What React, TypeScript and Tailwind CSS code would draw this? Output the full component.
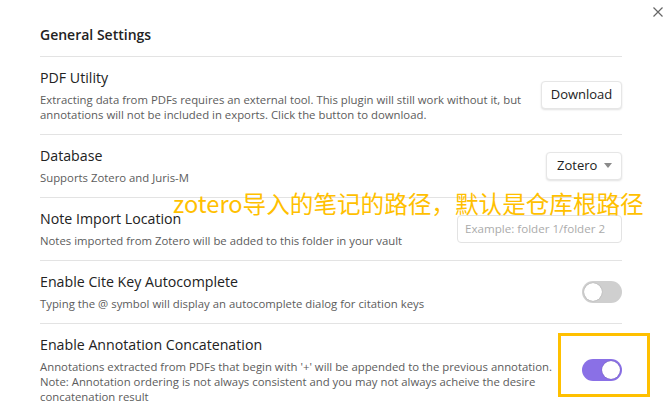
import React from 'react'

const font = { fontFamily: '"Open Sans", "Noto Sans CJK SC", sans-serif' }

function Toggle({ on }: { on: boolean }) {
  return (
    <div
      className={`flex h-[22px] w-[40px] items-center rounded-full px-[2px] ${
        on ? 'justify-end bg-[#8a70e6]' : 'justify-start bg-[#cfcfcf]'
      }`}
    >
      <div className="h-[18px] w-[18px] rounded-full bg-white shadow-[0_0_1px_rgba(0,0,0,0.4)]" />
    </div>
  )
}

function Row({
  title,
  children,
  control,
}: {
  title: string
  children: React.ReactNode
  control: React.ReactNode
}) {
  return (
    <div className="flex items-center gap-4 border-t border-[#e3e3e3] pt-[11px] pb-[12px]">
      <div className="flex-1">
        <div className="text-[14.2px] leading-[20px] text-[#222]">{title}</div>
        <div className="mt-1 text-[11.35px] leading-[15px] text-[#5c5c5c]">{children}</div>
      </div>
      <div className="shrink-0">{control}</div>
    </div>
  )
}

export default function App() {
  return (
    <div className="relative h-[417px] w-[667px] overflow-hidden bg-white" style={font}>
      <button className="absolute top-[7px] right-[4px] text-[#666]">
        <svg width="10" height="10" viewBox="0 0 10 10">
          <path d="M0.5 0.5 L9.5 9.5 M9.5 0.5 L0.5 9.5" stroke="currentColor" strokeWidth="1.2" />
        </svg>
      </button>

      <div className="w-[622px] pl-[40px]">
        <div className="pt-[25px] pb-[11px] text-[14px] leading-[20px] font-semibold text-[#222]">
          General Settings
        </div>

        <Row
          title="PDF Utility"
          control={
            <button className="h-[28px] w-[81px] rounded-[4px] border border-[#e6e6e6] bg-white text-[13px] text-[#222] shadow-[0_1px_2px_rgba(0,0,0,0.12)]">
              Download
            </button>
          }
        >
          Extracting data from PDFs requires an external tool. This plugin will still work without it, but
          annotations will not be included in exports. Click the button to download.
        </Row>

        <Row
          title="Database"
          control={
            <div className="flex h-[28px] w-[76px] items-center justify-between rounded-[4px] border border-[#e6e6e6] bg-white pr-[9px] pl-[10px] text-[13px] text-[#222] shadow-[0_1px_2px_rgba(0,0,0,0.12)]">
              <span>Zotero</span>
              <svg width="8" height="5" viewBox="0 0 8 5">
                <path d="M0 0 H8 L4 5 Z" fill="#8a8a8a" />
              </svg>
            </div>
          }
        >
          Supports Zotero and Juris-M
        </Row>

        <Row
          title="Note Import Location"
          control={
            <input
              className="h-[28px] w-[165px] rounded-[4px] border border-[#e3e3e3] bg-white px-[7px] text-[11.6px] text-[#222] placeholder:text-[#ababab] focus:outline-none"
              placeholder="Example: folder 1/folder 2"
            />
          }
        >
          Notes imported from Zotero will be added to this folder in your vault
        </Row>

        <Row title="Enable Cite Key Autocomplete" control={<Toggle on={false} />}>
          Typing the @ symbol will display an autocomplete dialog for citation keys
        </Row>

        <Row title="Enable Annotation Concatenation" control={<Toggle on />}>
          Annotations extracted from PDFs that begin with '+' will be appended to the previous annotation.
          Note: Annotation ordering is not always consistent and you may not always acheive the desire
          concatenation result
        </Row>
      </div>

      <div
        className="pointer-events-none absolute top-[188px] left-[173px] text-[23.6px] leading-[30px] whitespace-nowrap text-[#ffc000]"
        style={{ fontFamily: '"Noto Sans CJK SC", sans-serif' }}
      >
        zotero导入的笔记的路径，默认是仓库根路径
      </div>

      <div className="pointer-events-none absolute top-[333px] left-[558px] h-[64px] w-[92px] border-[3px] border-[#ffc000]" />
    </div>
  )
}
